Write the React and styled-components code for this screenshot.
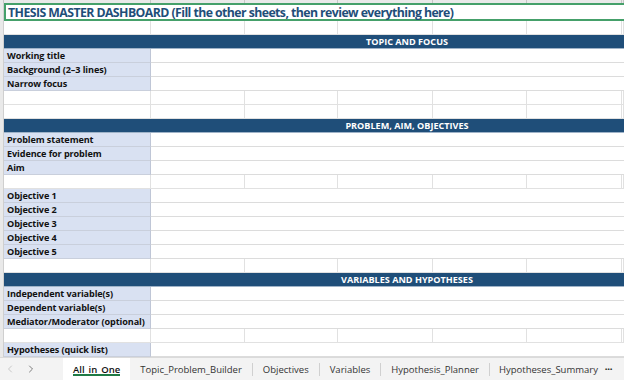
import React from "react";
import styled, { createGlobalStyle } from "styled-components";
import { ChevronLeft, ChevronRight } from "lucide-react";

const GlobalStyle = createGlobalStyle`
  body {
    margin: 0;
    background: #fff;
    font-family: "Open Sans", "Liberation Sans", sans-serif;
  }
`;

const COLS = "147px 94px 93px 95px 94px 95px 1fr";

const Sheet = styled.div`
  width: 624px;
  height: 380px;
  overflow: hidden;
  display: flex;
  flex-direction: column;
  background: #fff;
`;

const TopStrip = styled.div`
  height: 3px;
  flex: none;
  background: #e9e9e9;
  display: grid;
  grid-template-columns: 4px ${COLS};
  > span {
    border-right: 1px solid #c6c6c6;
  }
`;

const Body = styled.div`
  flex: 1;
  display: flex;
  overflow: hidden;
`;

const RowHeads = styled.div`
  width: 4px;
  flex: none;
  background: #e9e9e9;
  border-right: 1px solid #cfcfcf;
  box-sizing: border-box;
`;

const Cells = styled.div`
  flex: 1;
  display: flex;
  flex-direction: column;
  overflow: hidden;
`;

const TitleRow = styled.div`
  height: 18px;
  flex: none;
  box-sizing: border-box;
  border: 2px solid #45a06a;
  border-right: none;
  display: flex;
  align-items: center;
  padding-left: 2px;
  color: #1f4e79;
  font-weight: 700;
  font-size: 12.3px;
  letter-spacing: -0.57px;
  white-space: nowrap;
`;

const BlankRow = styled.div`
  height: 14px;
  flex: none;
  display: grid;
  grid-template-columns: ${COLS};
  > span {
    border-right: 1px solid #e1e1e1;
    border-bottom: 1px solid #e1e1e1;
  }
`;

const Section = styled.div`
  height: 14px;
  flex: none;
  box-sizing: border-box;
  background: #1f4e79;
  border-bottom: 1px solid #9fb3c8;
  color: #fff;
  font-weight: 700;
  font-size: 9.1px;
  display: flex;
  align-items: center;
  justify-content: center;
  padding-left: 186px;
  white-space: nowrap;
`;

const Field = styled.div`
  height: 14px;
  flex: none;
  display: grid;
  grid-template-columns: 147px 1fr;
`;

const Label = styled.div`
  background: #d9e1f2;
  border-right: 1px solid #bfc6d6;
  border-bottom: 1px solid #c9cfdc;
  box-sizing: border-box;
  font-size: 9.1px;
  font-weight: 700;
  color: #111;
  padding-left: 3px;
  display: flex;
  align-items: center;
  white-space: nowrap;
  letter-spacing: -0.1px;
`;

const Value = styled.div`
  border-bottom: 1px solid #dcdcdc;
  box-sizing: border-box;
`;

const TabBar = styled.div`
  height: 23px;
  flex: none;
  background: #f3f3f3;
  border-top: 1px solid #dadada;
  box-sizing: border-box;
  display: flex;
  align-items: center;
  font-size: 9.5px;
  color: #333;
  white-space: nowrap;
  > * {
    flex: none;
  }
`;

const Nav = styled.span`
  width: ${(p) => p.$w}px;
  display: flex;
  justify-content: center;
  color: ${(p) => (p.$dim ? "#b8b8b8" : "#555")};
`;

const Gap = styled.span`
  width: ${(p) => p.$w}px;
`;

const Tab = styled.span`
  position: relative;
  padding: 0 ${(p) => p.$pad}px;
  height: 100%;
  display: flex;
  align-items: center;
  background: ${(p) => (p.$active ? "#fff" : "transparent")};
  font-weight: ${(p) => (p.$active ? 600 : 400)};
  color: ${(p) => (p.$active ? "#111" : "#333")};
  ${(p) =>
    p.$active &&
    `
    &::after {
      content: "";
      position: absolute;
      left: ${p.$pad}px;
      right: ${p.$pad}px;
      bottom: 4px;
      height: 2px;
      background: #1f7a45;
    }
  `}
`;

const Sep = styled.span`
  width: 1px;
  height: 13px;
  background: #d0d0d0;
`;

const More = styled.span`
  margin-left: -2px;
  font-weight: 700;
  font-size: 6px;
  letter-spacing: 0.3px;
  color: #333;
`;

const blank = () => (
  <BlankRow>
    {Array.from({ length: 7 }).map((_, i) => (
      <span key={i} />
    ))}
  </BlankRow>
);

const field = (text) => (
  <Field key={text}>
    <Label>{text}</Label>
    <Value />
  </Field>
);

export default function App() {
  return (
    <Sheet>
      <GlobalStyle />
      <TopStrip>
        {Array.from({ length: 8 }).map((_, i) => (
          <span key={i} />
        ))}
      </TopStrip>
      <Body>
        <RowHeads />
        <Cells>
          <TitleRow>
            THESIS MASTER DASHBOARD (Fill the other sheets, then review everything here)
          </TitleRow>
          {blank()}
          <Section>TOPIC AND FOCUS</Section>
          {["Working title", "Background (2–3 lines)", "Narrow focus"].map(field)}
          {blank()}
          {blank()}
          <Section>PROBLEM, AIM, OBJECTIVES</Section>
          {["Problem statement", "Evidence for problem", "Aim"].map(field)}
          {blank()}
          {["Objective 1", "Objective 2", "Objective 3", "Objective 4", "Objective 5"].map(field)}
          {blank()}
          <Section>VARIABLES AND HYPOTHESES</Section>
          {[
            "Independent variable(s)",
            "Dependent variable(s)",
            "Mediator/Moderator (optional)",
          ].map(field)}
          {blank()}
          {field("Hypotheses (quick list)")}
          {blank()}
        </Cells>
      </Body>
      <TabBar>
        <Nav $w={20} $dim>
          <ChevronLeft size={12} strokeWidth={1.5} />
        </Nav>
        <Nav $w={22}>
          <ChevronRight size={12} strokeWidth={1.5} />
        </Nav>
        <Gap $w={21} />
        <Tab $active $pad={10}>
          All_in_One
        </Tab>
        <Tab $pad={10}>Topic_Problem_Builder</Tab>
        <Sep />
        <Tab $pad={10}>Objectives</Tab>
        <Sep />
        <Tab $pad={10}>Variables</Tab>
        <Sep />
        <Tab $pad={10}>Hypothesis_Planner</Tab>
        <Sep />
        <Tab $pad={9}>Hypotheses_Summary</Tab>
        <More>•••</More>
      </TabBar>
    </Sheet>
  );
}
